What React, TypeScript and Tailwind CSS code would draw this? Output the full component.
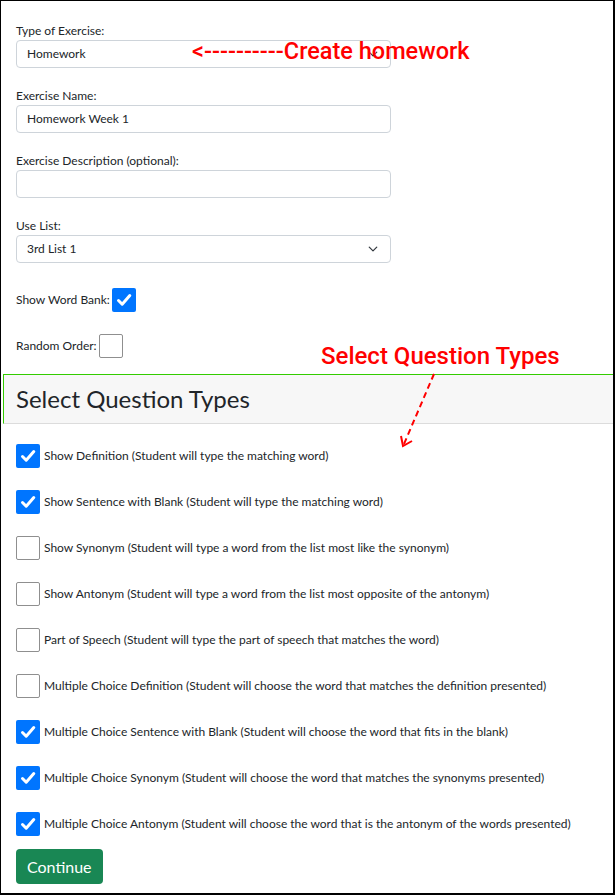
import React from 'react'

const questionTypes = [
  { label: 'Show Definition (Student will type the matching word)', checked: true },
  { label: 'Show Sentence with Blank (Student will type the matching word)', checked: true },
  { label: 'Show Synonym (Student will type a word from the list most like the synonym)', checked: false },
  { label: 'Show Antonym (Student will type a word from the list most opposite of the antonym)', checked: false },
  { label: 'Part of Speech (Student will type the part of speech that matches the word)', checked: false },
  { label: 'Multiple Choice Definition (Student will choose the word that matches the definition presented)', checked: false },
  { label: 'Multiple Choice Sentence with Blank (Student will choose the word that fits in the blank)', checked: true },
  { label: 'Multiple Choice Synonym (Student will choose the word that matches the synonyms presented)', checked: true },
  { label: 'Multiple Choice Antonym (Student will choose the word that is the antonym of the words presented)', checked: true },
]

function Checkbox({ checked }: { checked: boolean }) {
  if (checked) {
    return (
      <span className="flex h-[24px] w-[24px] shrink-0 items-center justify-center rounded-[2px] bg-[#0075ff]">
        <svg width="18" height="18" viewBox="0 0 18 18" fill="none">
          <path d="M3.5 9.5 L7.2 13.2 L14.8 4.6" stroke="white" strokeWidth="3" strokeLinecap="round" strokeLinejoin="round" />
        </svg>
      </span>
    )
  }
  return <span className="h-[24px] w-[24px] shrink-0 rounded-[2px] border border-[#8f8f8f] bg-white" />
}

function Field({ label, value, select }: { label: string; value?: string; select?: boolean }) {
  return (
    <div className="mb-[19px]">
      <div className="h-[18px] text-[12px] leading-[18px]">{label}</div>
      <div className="flex h-[28px] w-[375px] items-center justify-between rounded-[4px] border border-[#ced4da] pl-[10px] pr-[12px] text-[12px]">
        <span>{value}</span>
        {select && (
          <svg width="10" height="10" viewBox="0 0 16 16" fill="none">
            <path d="M2 5l6 6 6-6" stroke="#343a40" strokeWidth="2" strokeLinecap="round" strokeLinejoin="round" />
          </svg>
        )}
      </div>
    </div>
  )
}

export default function App() {
  return (
    <div className="relative h-[895px] w-[615px] overflow-hidden border-t border-l border-r-2 border-b-2 border-black bg-white font-['Lato',sans-serif] text-[#212529]">
      {/* Form */}
      <div className="px-[15px] pt-[21px]">
        <Field label="Type of Exercise:" value="Homework" select />
        <Field label="Exercise Name:" value="Homework Week 1" />
        <Field label="Exercise Description (optional):" />
        <Field label="Use List:" value="3rd List 1" select />

        <div className="mt-[25px] flex items-center gap-[2px] text-[12px]">
          <span>Show Word Bank:</span>
          <Checkbox checked />
        </div>
        <div className="mt-[22px] flex items-center gap-[2px] text-[12px]">
          <span>Random Order:</span>
          <Checkbox checked={false} />
        </div>
      </div>

      {/* Question types card */}
      <div className="ml-[2px] mt-[16px] w-[640px]">
        <div className="flex h-[50px] items-center border-t border-l border-b border-t-[#33cc00] border-l-[#33cc00] border-b-[#dcdcdc] bg-[#f7f7f7] pl-[12px]">
          <h2 className="text-[24px] leading-none">Select Question Types</h2>
        </div>
        <div className="flex flex-col gap-[22px] pl-[13px] pt-[20px]">
          {questionTypes.map((q) => (
            <div key={q.label} className="flex items-center gap-[4px] text-[12px]">
              <Checkbox checked={q.checked} />
              <span>{q.label}</span>
            </div>
          ))}
        </div>
        <button className="ml-[13px] mt-[13px] h-[35px] rounded-[4px] bg-[#198754] px-[11px] text-[16px] text-white">
          Continue
        </button>
      </div>

      {/* Annotations */}
      <div className="absolute left-[191px] top-[36px] font-['Roboto',sans-serif] text-[23.5px] font-medium leading-[28px] text-[#ff0000]">
        &lt;----------Create homework
      </div>
      <div className="absolute left-[320px] top-[341px] font-['Roboto',sans-serif] text-[24px] font-medium leading-[28px] text-[#ff0000]">
        Select Question Types
      </div>
      <svg className="pointer-events-none absolute left-0 top-0" width="615" height="895">
        <line x1="433" y1="373" x2="403" y2="443" stroke="#ff0000" strokeWidth="2" strokeDasharray="6 4" />
        <polyline points="400,435 402,445 411,440" fill="none" stroke="#ff0000" strokeWidth="2" />
      </svg>
    </div>
  )
}
